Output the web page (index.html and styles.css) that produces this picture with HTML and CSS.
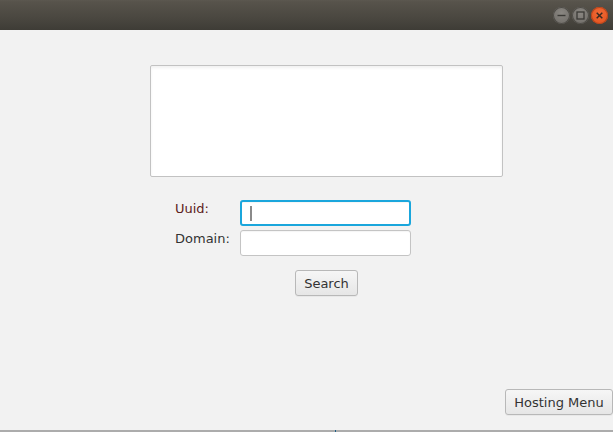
FILE: index.html
```html
<!DOCTYPE html>
<html>
<head>
<meta charset="utf-8">
<link rel="stylesheet" href="styles.css">
</head>
<body>
<div class="window">
  <div class="titlebar">
    <div class="wbtn gray">
      <svg width="17" height="17" viewBox="0 0 17 17"><path d="M4.5 8.5h8" stroke="#3b3a36" stroke-width="1.4"/></svg>
    </div>
    <div class="wbtn gray">
      <svg width="17" height="17" viewBox="0 0 17 17"><rect x="5" y="5" width="7" height="7" fill="none" stroke="#3b3a36" stroke-width="1.3"/></svg>
    </div>
    <div class="wbtn close">
      <svg width="17" height="17" viewBox="0 0 17 17"><path d="M5.7 5.7l5.6 5.6M11.3 5.7l-5.6 5.6" stroke="#3b2a20" stroke-width="1.5"/></svg>
    </div>
  </div>
  <div class="content">
    <div class="textarea"></div>
    <div class="form">
      <label class="lbl uuid">Uuid:</label>
      <div class="field focused"><span class="caret"></span></div>
      <label class="lbl">Domain:</label>
      <div class="field"></div>
    </div>
    <div class="search-row"><button class="btn">Search</button></div>
    <div class="bottom-row"><button class="btn hosting">Hosting Menu</button></div>
  </div>
  <div class="statusline"><span class="mark"></span></div>
</div>
</body>
</html>
```
FILE: styles.css
```css
html, body {
  margin: 0;
  padding: 0;
  background: #f2f2f2;
}
.window {
  width: 613px;
  height: 432px;
  display: flex;
  flex-direction: column;
  font-family: "DejaVu Sans", sans-serif;
  font-size: 13px;
  color: #333;
  background: #f2f2f2;
}
.titlebar {
  height: 30px;
  flex: none;
  background: linear-gradient(#5c5850 0px, #57534b 2px, #4a4740 18px, #3e3c36 30px);
  display: flex;
  justify-content: flex-end;
  align-items: center;
  gap: 2px;
  padding-right: 5px;
  box-sizing: border-box;
}
.wbtn {
  width: 17px;
  height: 17px;
  border-radius: 50%;
  display: flex;
}
.wbtn.gray {
  background: radial-gradient(circle at 50% 35%, #8a8782, #6c6964);
  box-shadow: inset 0 0 0 1px #4e4c47;
}
.wbtn.close {
  background: radial-gradient(circle at 50% 35%, #f06a36, #e2501c);
  box-shadow: inset 0 0 0 1px #b8451c;
}
.content {
  flex: 1;
  display: flex;
  flex-direction: column;
  padding-top: 35px;
}
.textarea {
  margin-left: 150px;
  width: 353px;
  height: 112px;
  box-sizing: border-box;
  background: #fff;
  border: 1px solid #c2c2c2;
  border-radius: 2px;
  box-shadow: inset 0 2px 3px rgba(0,0,0,0.06);
}
.form {
  margin-top: 23px;
  margin-left: 175px;
  display: grid;
  grid-template-columns: 65px 171px;
  row-gap: 4px;
  align-items: start;
}
.lbl {
  line-height: 16px;
  padding-top: 1px;
}
.lbl.uuid {
  color: #5c2020;
}
.field {
  height: 26px;
  box-sizing: border-box;
  background: #fff;
  border: 1px solid #c4c4c4;
  border-radius: 3px;
  box-shadow: inset 0 1px 1px rgba(0,0,0,0.04);
  display: flex;
  align-items: center;
}
.field.focused {
  border: 2px solid #1aa6dc;
}
.caret {
  width: 2px;
  height: 15px;
  background: #8a8a8a;
  margin-left: 8px;
}
.search-row {
  margin-top: 14px;
  margin-left: 295px;
  display: flex;
}
.btn {
  font-family: "DejaVu Sans", sans-serif;
  font-size: 13px;
  color: #333;
  height: 26px;
  box-sizing: border-box;
  padding: 0 8px;
  border: 1px solid #b8b8b8;
  border-radius: 3px;
  background: linear-gradient(#f6f6f6, #e6e6e6);
  box-shadow: 0 1px 0 rgba(0,0,0,0.04);
  margin: 0;
}
.search-row .btn {
  width: 63px;
}
.bottom-row {
  margin-top: auto;
  margin-bottom: 15px;
  display: flex;
  justify-content: flex-end;
}
.btn.hosting {
  width: 108px;
}
.statusline {
  height: 2px;
  flex: none;
  background: #acacac;
  position: relative;
}
.mark {
  position: absolute;
  left: 335px;
  top: 0;
  width: 1px;
  height: 2px;
  background: #1d5f86;
}
```
